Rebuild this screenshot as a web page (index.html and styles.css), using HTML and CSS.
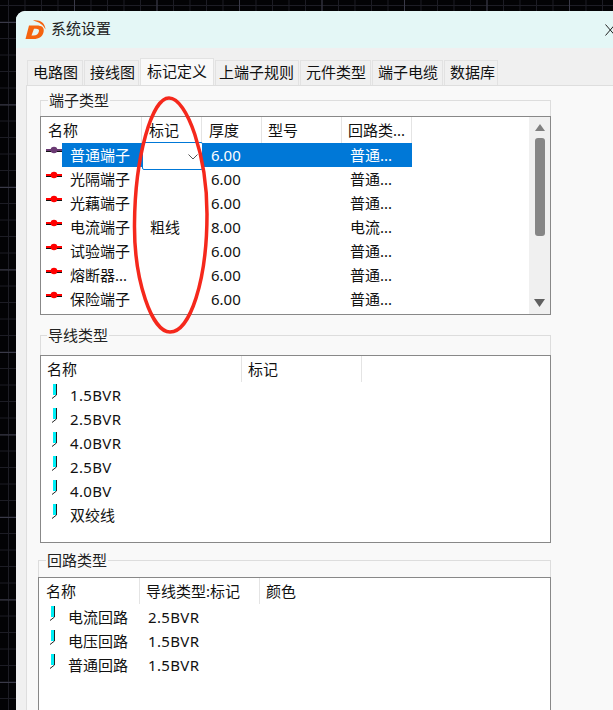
FILE: index.html
```
<!DOCTYPE html>
<html lang="zh">
<head>
<meta charset="utf-8">
<title>系统设置</title>
<link rel="stylesheet" href="styles.css">
</head>
<body>
<svg class="defs" width="0" height="0" aria-hidden="true">
  <symbol id="term" viewBox="0 0 16 9">
    <rect x="0" y="3" width="16" height="2" fill="currentColor"/>
    <rect x="0" y="5" width="16" height="1" fill="#111"/>
    <circle cx="8" cy="4" r="3.3" fill="currentColor"/>
  </symbol>
  <symbol id="wire" viewBox="0 0 8 16">
    <rect x="4" y="1" width="3" height="11" fill="#00eef6"/>
    <path d="M7.500 1V12L3 15.500" fill="none" stroke="#222" stroke-width="1"/>
  </symbol>
</svg>
<main class="window">
  <header class="titlebar">
    <svg class="logo" viewBox="0 0 22 21" aria-hidden="true">
      <path d="M4 6.500H11.500C17 6.500 19.500 8.500 18.600 13C17.700 17.500 14 20 8.500 20H0.500ZM9 9.700L6.500 16.600H8.600C11.500 16.600 13.200 15.200 13.900 12.600C14.400 10.600 13.400 9.700 11 9.700Z" fill="#f5640f" fill-rule="evenodd"/>
      <path d="M8 1.500C14.500 0.500 20 3.500 20.500 10.500C18.500 6 14.500 3 8 1.500Z" fill="#f5640f"/>
    </svg>
    <span class="title">系统设置</span>
    <svg class="close" viewBox="0 0 10 12" aria-hidden="true"><path d="M0.500 0.500L10 11.500M10 0.500L0.500 11.500" stroke="#222" stroke-width="1" fill="none"/></svg>
  </header>
  <section class="content">
    <nav class="tabs">
      <span class="tab t1">电路图</span>
      <span class="tab t2">接线图</span>
      <span class="tab active">标记定义</span>
      <span class="tab t4">上端子规则</span>
      <span class="tab t5">元件类型</span>
      <span class="tab t5">端子电缆</span>
      <span class="tab t6">数据库</span>
    </nav>
    <div class="panel">
      <fieldset class="group g1">
        <legend>端子类型</legend>
        <div class="list l1">
          <div class="row head"><span class="c1">名称</span><span class="c2">标记</span><span class="c3">厚度</span><span class="c4">型号</span><span class="c5">回路类...</span></div>
          <div class="row selected"><span class="c1"><svg class="ticon purple"><use href="#term"/></svg>普通端子</span><span class="c2"><span class="combo"><svg class="chev" viewBox="0 0 10 6"><path d="M0.500 0.500L5 5L9.500 0.500" fill="none" stroke="#555" stroke-width="1"/></svg></span></span><span class="c3">6.00</span><span class="c4"></span><span class="c5">普通...</span></div>
          <div class="row"><span class="c1"><svg class="ticon red"><use href="#term"/></svg>光隔端子</span><span class="c2"></span><span class="c3">6.00</span><span class="c4"></span><span class="c5">普通...</span></div>
          <div class="row"><span class="c1"><svg class="ticon red"><use href="#term"/></svg>光藕端子</span><span class="c2"></span><span class="c3">6.00</span><span class="c4"></span><span class="c5">普通...</span></div>
          <div class="row"><span class="c1"><svg class="ticon red"><use href="#term"/></svg>电流端子</span><span class="c2">粗线</span><span class="c3">8.00</span><span class="c4"></span><span class="c5">电流...</span></div>
          <div class="row"><span class="c1"><svg class="ticon red"><use href="#term"/></svg>试验端子</span><span class="c2"></span><span class="c3">6.00</span><span class="c4"></span><span class="c5">普通...</span></div>
          <div class="row"><span class="c1"><svg class="ticon red"><use href="#term"/></svg>熔断器...</span><span class="c2"></span><span class="c3">6.00</span><span class="c4"></span><span class="c5">普通...</span></div>
          <div class="row"><span class="c1"><svg class="ticon red"><use href="#term"/></svg>保险端子</span><span class="c2"></span><span class="c3">6.00</span><span class="c4"></span><span class="c5">普通...</span></div>
          <div class="scrollbar">
            <svg class="arrow" viewBox="0 0 10 7"><path d="M5 0L10 7H0Z" fill="#808080"/></svg>
            <div class="thumb"></div>
            <svg class="arrow down" viewBox="0 0 11 8"><path d="M0 0H11L5.500 8Z" fill="#606060"/></svg>
          </div>
        </div>
      </fieldset>
      <fieldset class="group g2">
        <legend>导线类型</legend>
        <div class="list l2">
          <div class="row head"><span class="n">名称</span><span class="m">标记</span></div>
          <div class="row"><span class="n code"><svg class="wicon"><use href="#wire"/></svg>1.5BVR</span></div>
          <div class="row"><span class="n code"><svg class="wicon"><use href="#wire"/></svg>2.5BVR</span></div>
          <div class="row"><span class="n code"><svg class="wicon"><use href="#wire"/></svg>4.0BVR</span></div>
          <div class="row"><span class="n code"><svg class="wicon"><use href="#wire"/></svg>2.5BV</span></div>
          <div class="row"><span class="n code"><svg class="wicon"><use href="#wire"/></svg>4.0BV</span></div>
          <div class="row"><span class="n"><svg class="wicon"><use href="#wire"/></svg>双绞线</span></div>
        </div>
      </fieldset>
      <fieldset class="group g3">
        <legend>回路类型</legend>
        <div class="list l3">
          <div class="row head"><span class="a">名称</span><span class="b">导线类型:标记</span><span class="d">颜色</span></div>
          <div class="row"><span class="a"><svg class="wicon"><use href="#wire"/></svg>电流回路</span><span class="b code">2.5BVR</span></div>
          <div class="row"><span class="a"><svg class="wicon"><use href="#wire"/></svg>电压回路</span><span class="b code">1.5BVR</span></div>
          <div class="row"><span class="a"><svg class="wicon"><use href="#wire"/></svg>普通回路</span><span class="b code">1.5BVR</span></div>
        </div>
      </fieldset>
    </div>
  </section>
</main>
<svg class="annotation" viewBox="0 0 80 240" aria-hidden="true">
  <path d="M37 2C20 2 3 60 2.500 128C2 185 20 236 38 236C58 236 75 185 75 118C75 60 55 2 37 2Z" fill="none" stroke="#f5281c" stroke-width="3.500"/>
</svg>
</body>
</html>
```
FILE: styles.css
```
* { box-sizing: border-box; }
html, body { margin: 0; height: 710px; overflow: hidden; }
body {
  position: relative;
  padding: 11px 0 0 16px;
  background-color: #030305;
  background-image:
    linear-gradient(90deg, #3a3a48 1px, transparent 1px),
    linear-gradient(0deg, #3a3a48 1px, transparent 1px),
    linear-gradient(90deg, #1d1d25 1px, transparent 1px),
    linear-gradient(0deg, #1d1d25 1px, transparent 1px);
  background-size: 82.5px 100%, 100% 82.5px, 16.5px 100%, 100% 16.5px;
  background-position: 74px 0, 0 23px, 8px 0, 0 6px;
  font: 15px/24px "Noto Sans", "Noto Sans CJK SC", sans-serif;
  color: #111;
}
.defs { position: absolute; }
.window {
  width: 620px;
  height: 720px;
  border-radius: 9px 0 0 0;
  overflow: hidden;
  background: #f0f0f0;
}
.titlebar {
  height: 37px;
  background: #e4f7f6;
  display: flex;
  align-items: center;
  padding-left: 9px;
}
.logo { width: 22px; height: 21px; }
.title { margin-left: 4px; padding-bottom: 3px; color: #222; }
.close { width: 10px; height: 12px; margin-left: 494px; }
.content { padding-left: 10px; }
.tabs { display: flex; align-items: flex-end; height: 37px; padding-left: 1px; gap: 1px; }
.tab {
  height: 25px;
  line-height: 22px;
  padding-left: 5px;
  background: #f0f0f0;
  border: 1px solid #e2e2e2;
  border-bottom: 0;
}
.t1 { width: 56px; }
.t2 { width: 55px; }
.active { width: 74px; height: 27px; line-height: 24px; padding-left: 6px; background: #f9f9f9; }
.t4 { width: 84px; padding-left: 3px; }
.t5 { width: 71px; }
.t6 { width: 54px; }
.panel {
  height: 640px;
  background: #f9f9f9;
  border-top: 1px solid #dedede;
  border-left: 1px solid #dedede;
  padding: 4px 0 0 13px;
}
.group {
  margin: 0;
  padding: 0;
  min-width: 0;
  border: 1px solid #dddddd;
  border-bottom: 0;
}
.group legend {
  padding: 0 1px;
  height: 20px;
  line-height: 20px;
  color: #222;
}
.g1 { width: 511px; }
.g1 legend { margin-left: 7px; }
.g2 { width: 511px; margin-top: 10px; }
.g2 legend { margin-left: 6px; }
.g3 { width: 513px; margin: 7px 0 0 -2px; }
.g3 legend { margin-left: 7px; }
.list {
  position: relative;
  margin: 6px -1px 0;
  background: #fff;
  border: 1px solid #888;
}
.l1 { height: 199px; }
.l2 { height: 188px; margin-top: 10px; }
.l3 { height: 200px; margin-top: 7px; }
.row { display: flex; height: 24px; white-space: nowrap; }
.row > span { display: block; flex: none; }
.code { letter-spacing: 0.35px; }
.head { height: 26px; line-height: 27px; }
.l2 .head, .l3 .head { height: 27px; }
.head > span { padding-left: 7px; border-right: 1px solid #e4e4e4; height: 26px; }
.c1 { width: 101px; padding-left: 29px; position: relative; }
.c2 { width: 60px; padding-left: 8px; position: relative; }
.c3 { width: 60px; padding-left: 9px; }
.c4 { width: 80px; padding-left: 7px; }
.c5 { width: 70px; padding-left: 8px; }
.head .c1 { padding-left: 7px; }
.head .c2 { padding-left: 7px; }
.head .c3 { padding-left: 7px; }
.head .c4 { padding-left: 6px; }
.head .c5 { padding-left: 6px; }
.selected { width: 371px; color: #fff; background: linear-gradient(90deg, transparent 21px, #0078d7 21px); }
.ticon { position: absolute; left: 5px; top: 4px; width: 16px; height: 9px; }
.selected .ticon { top: 3px; }
.red { color: #ff0000; }
.purple { color: #6b3a73; }
.combo {
  position: absolute;
  left: 0;
  top: -1px;
  width: 61px;
  height: 28px;
  background: #fff;
  border: 1px solid #0078d7;
  border-radius: 2px;
}
.chev { position: absolute; left: 45px; top: 11px; width: 10px; height: 6px; }
.scrollbar {
  position: absolute;
  right: 0;
  top: 0;
  bottom: 0;
  width: 21px;
  background: #f0f0f0;
  display: flex;
  flex-direction: column;
  align-items: center;
}
.arrow { width: 10px; height: 7px; margin-top: 7px; flex: none; }
.thumb { width: 10px; height: 98px; margin-top: 7px; border-radius: 3px; background: #868686; flex: none; }
.arrow.down { width: 11px; height: 8px; margin-top: auto; margin-bottom: 7px; }
.n { width: 201px; padding-left: 29px; position: relative; }
.l2 .head .n { padding-left: 6px; }
.m { width: 120px; }
.l2 .head .m { padding-left: 6px; }
.a { width: 101px; padding-left: 29px; position: relative; }
.b { width: 120px; padding-left: 8px; }
.l3 .head .a { padding-left: 7px; }
.l3 .head .b { padding-left: 6px; }
.d { width: 120px; }
.l3 .head .d { border-right: 0; padding-left: 6px; }
.wicon { position: absolute; left: 8px; top: 0; width: 8px; height: 16px; }
.annotation {
  position: absolute;
  left: 132px;
  top: 96px;
  width: 80px;
  height: 240px;
}
```
